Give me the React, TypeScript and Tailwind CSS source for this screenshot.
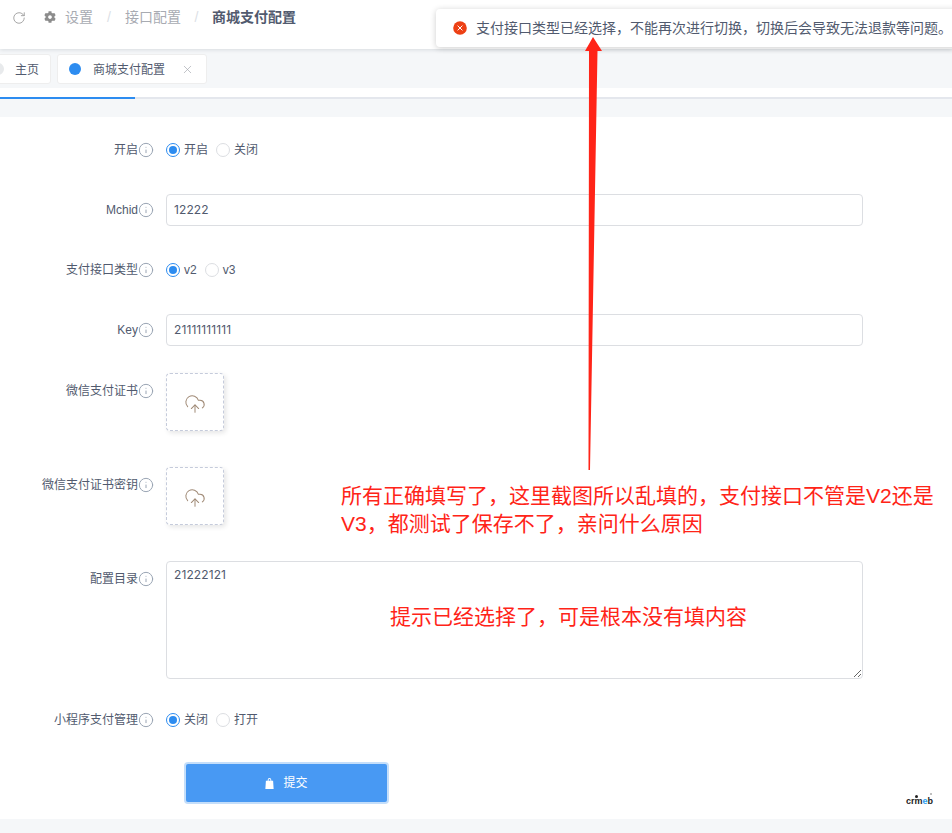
import { CloudUpload, Info, RotateCw, X } from 'lucide-react'
import { FaCog } from 'react-icons/fa'

const font = { fontFamily: '"Liberation Sans", "Noto Sans CJK SC", sans-serif' }
const digits = { fontFamily: 'Inter, "Liberation Sans", sans-serif' }

function FormLabel({ text, top }: { text: string; top?: boolean }) {
  return (
    <div className={`w-[154px] shrink-0 flex items-center justify-end text-xs text-[#515a6e] h-8 ${top ? 'mt-[2px]' : ''}`}>
      <span>{text}</span>
      <Info className="w-4 h-4 text-[#9aa5b4]" strokeWidth={1.5} />
    </div>
  )
}

function Radio({ label, checked }: { label: string; checked?: boolean }) {
  return (
    <label className="flex items-center text-xs text-[#515a6e] mr-2">
      {checked ? (
        <span className="w-[14px] h-[14px] rounded-full border border-[#2d8cf0] flex items-center justify-center mr-1">
          <span className="w-2 h-2 rounded-full bg-[#2d8cf0]" />
        </span>
      ) : (
        <span className="w-[14px] h-[14px] rounded-full border border-[#dcdee2] mr-1" />
      )}
      {label}
    </label>
  )
}

function RadioRow({ label, options, className }: { label: string; options: string[]; className?: string }) {
  return (
    <div className={`flex items-center h-8 ${className ?? ''}`}>
      <FormLabel text={label} />
      <div className="flex items-center ml-3">
        <Radio label={options[0]} checked />
        <Radio label={options[1]} />
      </div>
    </div>
  )
}

function InputRow({ label, value }: { label: string; value: string }) {
  return (
    <div className="flex items-center mb-7">
      <FormLabel text={label} />
      <div
        style={digits}
        className="ml-3 w-[697px] h-8 border border-[#dcdee2] rounded flex items-center px-[7px] text-xs tracking-[0.1px] text-[#515a6e] bg-white"
      >
        {value}
      </div>
    </div>
  )
}

function UploadRow({ label, className }: { label: string; className?: string }) {
  return (
    <div className={`flex items-start ${className ?? ''}`}>
      <FormLabel text={label} top />
      <div className="ml-3 w-[58px] h-[58px] border border-dashed border-[#c5cbdb] rounded flex items-center justify-center shadow-[2px_2px_5px_rgba(0,0,0,0.1)] bg-white">
        <CloudUpload className="w-[22px] h-[22px] mt-1 text-[#a08a76]" strokeWidth={1.1} />
      </div>
    </div>
  )
}

export default function App() {
  return (
    <div style={font} className="relative w-[952px] h-[833px] overflow-hidden bg-[#f5f7f9]">
      {/* 顶部面包屑 */}
      <div className="h-[49px] bg-white flex items-start pt-[8px] pl-3 text-sm shadow-[0_1px_4px_rgba(0,21,41,0.12)] relative">
        <div className="h-[18px] mt-px flex items-center">
          <RotateCw className="w-[14px] h-[14px] text-[#9a9a9a]" strokeWidth={1.5} />
        </div>
        <div className="flex items-center h-[18px] ml-[18px]">
          <FaCog className="w-3 h-3 text-[#8c8c8c] mr-[9px]" />
          <span className="text-[#a8abb2]">设置</span>
          <span className="text-[#dcdfe6] w-8 text-center">/</span>
          <span className="text-[#a8abb2]">接口配置</span>
          <span className="text-[#dcdfe6] w-[31px] text-center">/</span>
          <span className="font-bold text-[#515a6e]">商城支付配置</span>
        </div>
      </div>

      {/* 标签页 */}
      <div className="h-[39px] pt-[5px] flex gap-[6px] -ml-[45px] shadow-[0_1px_2px_rgba(0,0,0,0.08)]">
        <div className="w-[96px] h-[30px] bg-white border border-[#eeeeee] rounded-[3px] flex items-center pl-[36px] text-xs text-[#515a6e]">
          <span className="w-3 h-3 rounded-full bg-[#e8eaec] mr-[9px]" />
          <span className="ml-[2px] mt-[2px]">主页</span>
        </div>
        <div className="w-[150px] h-[30px] bg-white border border-[#eeeeee] rounded-[3px] flex items-center pl-[11px] text-xs text-[#515a6e]">
          <span className="w-3 h-3 rounded-full bg-[#2d8cf0] mr-3" />
          <span className="mt-[2px]">商城支付配置</span>
          <X className="w-[13px] h-[13px] ml-[16px] text-[#a0a4ab]" strokeWidth={1.2} />
        </div>
      </div>

      <div className="h-[9px] bg-white" />
      <div className="h-[2px] bg-[#e4e7ed] flex">
        <div className="w-[135px] bg-[#2d8cf0]" />
      </div>
      <div className="h-[18px]" />

      {/* 表单 */}
      <div className="bg-white h-[702px] pt-[17px]">
        <RadioRow label="开启" options={['开启', '关闭']} className="mb-7" />
        <InputRow label="Mchid" value="12222" />
        <RadioRow label="支付接口类型" options={['v2', 'v3']} className="mb-7" />
        <InputRow label="Key" value="21111111111" />
        <UploadRow label="微信支付证书" className="-mt-px mb-9" />
        <UploadRow label="微信支付证书密钥" className="mb-9" />
        <div className="flex items-start mb-[25px]">
          <FormLabel text="配置目录" top />
          <textarea
            readOnly
            value="21222121"
            style={digits}
            className="ml-3 w-[697px] h-[118px] border border-[#dcdee2] rounded px-[7px] py-1 text-xs tracking-[0.1px] leading-[18px] text-[#515a6e] outline-none"
          />
        </div>
        <RadioRow label="小程序支付管理" options={['关闭', '打开']} />
        <div className="ml-[184px] mt-[26px] w-[205px] h-[42px] rounded bg-[#4899f3] border-2 border-[#c4defa] flex items-center justify-center text-xs text-white">
          <svg viewBox="0 0 10 12" className="w-[9px] h-[11px] mr-[9px] fill-white">
            <path d="M1 3h2V2a2 2 0 0 1 4 0v1h2l.6 9H.4zM4 3h2V2a1 1 0 0 0-2 0z" />
          </svg>
          提交
        </div>
      </div>

      {/* 右下角标志 */}
      <div className="absolute left-[906px] top-[794px] text-[9px] leading-[14px] font-bold text-[#222]">
        crm<span className="text-[#2d9cf0]">e</span>b
        <span className="absolute left-[9px] top-px w-[3px] h-[3px] rounded-full bg-[#222]" />
        <span className="absolute left-[24px] -top-px w-[2px] h-[2px] rounded-full bg-[#aaaaaa]" />
      </div>

      {/* 错误提示 */}
      <div className="absolute left-[436px] top-[9px] w-[530px] h-[38px] bg-white rounded flex items-center pl-[17px] text-sm text-[#515a6e] shadow-[0_1px_6px_rgba(0,0,0,0.2)]">
        <svg viewBox="0 0 14 14" className="w-[14px] h-[14px] mr-[9px] shrink-0">
          <circle cx="7" cy="7" r="6.8" fill="#ed4014" />
          <path d="M4.6 4.6l4.8 4.8M9.4 4.6l-4.8 4.8" stroke="#fff" strokeWidth="1" />
        </svg>
        <span className="whitespace-nowrap">支付接口类型已经选择，不能再次进行切换，切换后会导致无法退款等问题。</span>
      </div>

      {/* 截图批注 */}
      <svg className="absolute left-[580px] top-[30px] w-[30px] h-[445px]" viewBox="0 0 30 445">
        <path d="M13 7 L22 21 L17.5 21 L10 440 L8.5 440 L9 21 L5 21 Z" fill="#ff2418" />
      </svg>
      <div className="absolute left-[341px] top-[482px] w-[600px] text-[21px] leading-[28px] text-[#ff2418]">
        所有正确填写了，这里截图所以乱填的，支付接口不管是V2还是
        <br />
        V3，都测试了保存不了，亲问什么原因
      </div>
      <div className="absolute left-[390px] top-[603px] whitespace-nowrap text-[21px] leading-[28px] text-[#ff2418]">
        提示已经选择了，可是根本没有填内容
      </div>
    </div>
  )
}
